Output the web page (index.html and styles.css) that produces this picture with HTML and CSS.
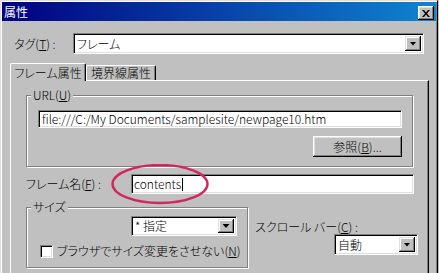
FILE: index.html
```html
<!DOCTYPE html>
<html lang="ja">
<head>
    <meta charset="UTF-8">
    <title>属性</title>
    <link rel="stylesheet" href="styles.css">
</head>
<body>
<div class="window">
    <div class="titlebar">
        <span class="title">属性</span>
        <span class="close-btn">
            <svg width="8" height="7" viewBox="0 0 8 7"><path d="M0 0h2l2 2.4 2-2.4h2l-3 3.5 3 3.5h-2l-2-2.4-2 2.4h-2l3-3.5z" fill="#000"/></svg>
        </span>
    </div>
    <div class="content">
        <div class="tag-row">
            <span class="tag-label">タグ(<u>T</u>) :</span>
            <div class="select tag-select">
                <span class="select-text">フレーム</span>
                <span class="drop-btn"></span>
            </div>
        </div>

        <div class="tabs">
            <div class="tab active">フレーム属性</div>
            <div class="tab">境界線属性</div>
        </div>

        <div class="panel">
            <div class="group url-group">
                <div class="group-title">URL(<u>U</u>)</div>
                <div class="textbox url-box">file:///C:/My Documents/samplesite/newpage10.htm</div>
                <div class="btn-row">
                    <div class="btn">参照(<u>B</u>)...</div>
                </div>
            </div>

            <div class="name-row">
                <span class="name-label">フレーム名(<u>F</u>) :</span>
                <div class="textbox name-box">contents<span class="caret"></span></div>
                <svg class="mark" width="100" height="42" viewBox="0 0 100 42">
                    <ellipse cx="49" cy="20" rx="47.5" ry="19" fill="none" stroke="#d2275c" stroke-width="2.4"/>
                </svg>
            </div>

            <div class="bottom-row">
                <div class="group size-group">
                    <div class="group-title">サイズ</div>
                    <div class="select size-select">
                        <span class="select-text">* 指定</span>
                        <span class="drop-btn"></span>
                    </div>
                    <div class="check-row">
                        <span class="checkbox"></span>
                        <span>ブラウザでサイズ変更をさせない(<u>N</u>)</span>
                    </div>
                </div>
                <div class="scroll-col">
                    <div class="scroll-label">スクロール バー(<u>C</u>) :</div>
                    <div class="select scroll-select">
                        <span class="select-text">自動</span>
                        <span class="drop-btn"></span>
                    </div>
                </div>
            </div>
        </div>
    </div>
</div>
</body>
</html>
```

FILE: styles.css
```css
html, body {
    height: 273px;
    overflow: hidden;
}
body {
    margin: 0;
    background-color: #c0c0c0;
    font-family: "Noto Sans CJK JP", sans-serif;
    font-feature-settings: "palt";
    font-size: 12px;
    font-weight: 300;
    line-height: 14px;
    color: #000;
}
u {
    text-underline-offset: 1px;
}
.window {
    width: 438px;
    height: 273px;
    box-sizing: border-box;
    border: 1px solid;
    border-bottom: none;
    border-color: #dfdfdf #000 #000 #dfdfdf;
    box-shadow: inset 1px 1px #fff, inset -1px 0 #808080;
    padding: 1px 1px 0;
}
.titlebar {
    height: 19px;
    display: flex;
    justify-content: space-between;
    align-items: flex-start;
    padding: 0 2px;
    background: linear-gradient(to right, #000080, #1084d0);
}
.title {
    color: #fff;
    font-weight: 400;
    line-height: 19px;
}
.close-btn {
    width: 16px;
    height: 14px;
    margin-top: 4px;
    box-sizing: border-box;
    display: flex;
    justify-content: center;
    align-items: center;
    background-color: #c0c0c0;
    box-shadow: inset -1px -1px #000, inset 1px 1px #fff, inset -2px -2px #808080, inset 2px 2px #dfdfdf;
}
.content {
    padding: 12px 0 0 8px;
}
.tag-row {
    display: flex;
    align-items: center;
    padding-left: 4px;
}
.tag-label {
    width: 59px;
}

/* controls */
.select {
    display: flex;
    box-sizing: border-box;
    background-color: #fff;
    border: 1px solid;
    border-color: #808080 #fff #fff #808080;
    box-shadow: inset 1px 1px #000, inset -1px -1px #dfdfdf;
    padding: 2px;
}
.select-text {
    flex: 1;
    display: flex;
    align-items: center;
    padding-left: 1px;
}
.drop-btn {
    width: 16px;
    display: flex;
    justify-content: center;
    align-items: center;
    background-color: #c0c0c0;
    box-shadow: inset -1px -1px #000, inset 1px 1px #dfdfdf, inset -2px -2px #808080, inset 2px 2px #fff;
}
.drop-btn::after {
    content: "";
    width: 7px;
    height: 4px;
    background-color: #000;
    clip-path: polygon(0 0, 100% 0, 50% 100%);
}
.tag-select {
    width: 351px;
    height: 21px;
}
.textbox {
    box-sizing: border-box;
    background-color: #fff;
    border: 1px solid;
    border-color: #808080 #fff #fff #808080;
    box-shadow: inset 1px 1px #000, inset -1px -1px #dfdfdf;
    padding: 0 3px;
    display: flex;
    align-items: center;
    white-space: nowrap;
    overflow: hidden;
}
.btn {
    box-sizing: border-box;
    display: flex;
    justify-content: center;
    align-items: center;
    background-color: #c0c0c0;
    box-shadow: inset -1px -1px #000, inset 1px 1px #fff, inset -2px -2px #808080, inset 2px 2px #dfdfdf;
}

/* tabs */
.tabs {
    display: flex;
    align-items: flex-end;
    margin-top: 9px;
    height: 17px;
}
.tab {
    box-sizing: border-box;
    height: 15px;
    border-left: 1px solid #fff;
    border-top: 1px solid #fff;
    border-right: 1px solid #000;
    border-radius: 2px 2px 0 0;
    box-shadow: inset -1px 0 #808080;
    background-color: #c0c0c0;
    text-align: center;
    width: 70px;
    line-height: 13px;
}
.tab.active {
    position: relative;
    z-index: 1;
    width: 76px;
    height: 18px;
    margin-bottom: -1px;
    padding-top: 2px;
}
.panel {
    width: 419px;
    height: 193px;
    box-sizing: border-box;
    border-left: 1px solid #fff;
    border-top: 1px solid #fff;
    border-right: 1px solid #000;
    box-shadow: inset -1px 0 #808080;
    padding: 14px 0 0 15px;
}

/* groups */
.group {
    box-sizing: border-box;
    border: 1px solid #808080;
    box-shadow: inset 1px 1px #fff, 1px 1px #fff;
}
.group-title {
    width: fit-content;
    margin: -8px 0 0 4px;
    padding: 0 2px;
    background-color: #c0c0c0;
}
.url-group {
    width: 387px;
    padding-bottom: 9px;
}
.url-box {
    height: 18px;
    margin: 8px 10px 0 11px;
}
.btn-row {
    display: flex;
    justify-content: flex-end;
    margin: 8px 10px 0 0;
}
.btn-row .btn {
    width: 89px;
    height: 21px;
}

.name-row {
    position: relative;
    display: flex;
    align-items: center;
    margin-top: 7px;
}
.name-label {
    width: 105px;
}
.name-box {
    width: 283px;
    height: 20px;
    padding-left: 2px;
}
.caret {
    width: 1px;
    height: 13px;
    margin-left: 1px;
    background-color: #000;
}
.mark {
    position: absolute;
    left: 85px;
    top: -10px;
}

.bottom-row {
    display: flex;
    margin-top: 13px;
}
.size-group {
    width: 222px;
    height: 61px;
}
.size-select {
    width: 106px;
    height: 20px;
    margin: 2px 0 0 104px;
}
.check-row {
    display: flex;
    align-items: center;
    gap: 4px;
    margin: 8px 0 0 13px;
}
.checkbox {
    width: 13px;
    height: 13px;
    box-sizing: border-box;
    background-color: #fff;
    border: 1px solid;
    border-color: #808080 #fff #fff #808080;
    box-shadow: inset 1px 1px #000, inset -1px -1px #dfdfdf;
}
.scroll-col {
    margin-left: 7px;
    padding-top: 13px;
}
.scroll-select {
    width: 84px;
    height: 21px;
    margin-left: 79px;
}
```
